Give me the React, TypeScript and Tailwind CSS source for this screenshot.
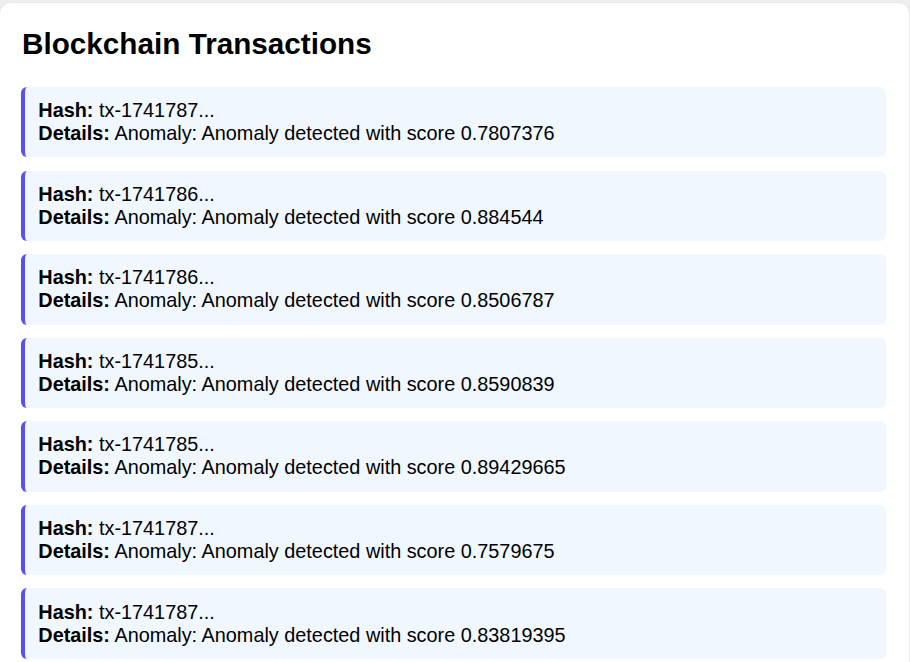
const transactions = [
  { hash: 'tx-1741787...', score: '0.7807376' },
  { hash: 'tx-1741786...', score: '0.884544' },
  { hash: 'tx-1741786...', score: '0.8506787' },
  { hash: 'tx-1741785...', score: '0.8590839' },
  { hash: 'tx-1741785...', score: '0.89429665' },
  { hash: 'tx-1741787...', score: '0.7579675' },
  { hash: 'tx-1741787...', score: '0.83819395' },
];

export default function App() {
  return (
    <div className="min-h-screen bg-[#eeeeee] pt-[3px] pr-[1px] font-['Liberation_Sans',Arial,sans-serif] text-black">
      <div className="bg-white rounded-[10px] shadow-[0_0_3px_rgba(0,0,0,0.08)] pl-[21px] pr-[23px] pt-[24px] pb-[24px]">
        <h2 className="text-[29.7px] font-bold leading-[34px] ml-[1px] mb-[26px]">Blockchain Transactions</h2>
        <div className="flex flex-col gap-[13.2px]">
          {transactions.map((tx, i) => (
            <div
              key={i}
              className="bg-[#f0f7ff] border-l-4 border-[#5a4ff0] rounded-[6px] pl-[13.3px] pr-[12.3px] py-[12.2px] text-[19.85px] leading-[23px]"
            >
              <div>
                <strong className="font-bold">Hash:</strong> {tx.hash}
              </div>
              <div>
                <strong className="font-bold">Details:</strong> Anomaly: Anomaly detected with score {tx.score}
              </div>
            </div>
          ))}
        </div>
      </div>
    </div>
  );
}
